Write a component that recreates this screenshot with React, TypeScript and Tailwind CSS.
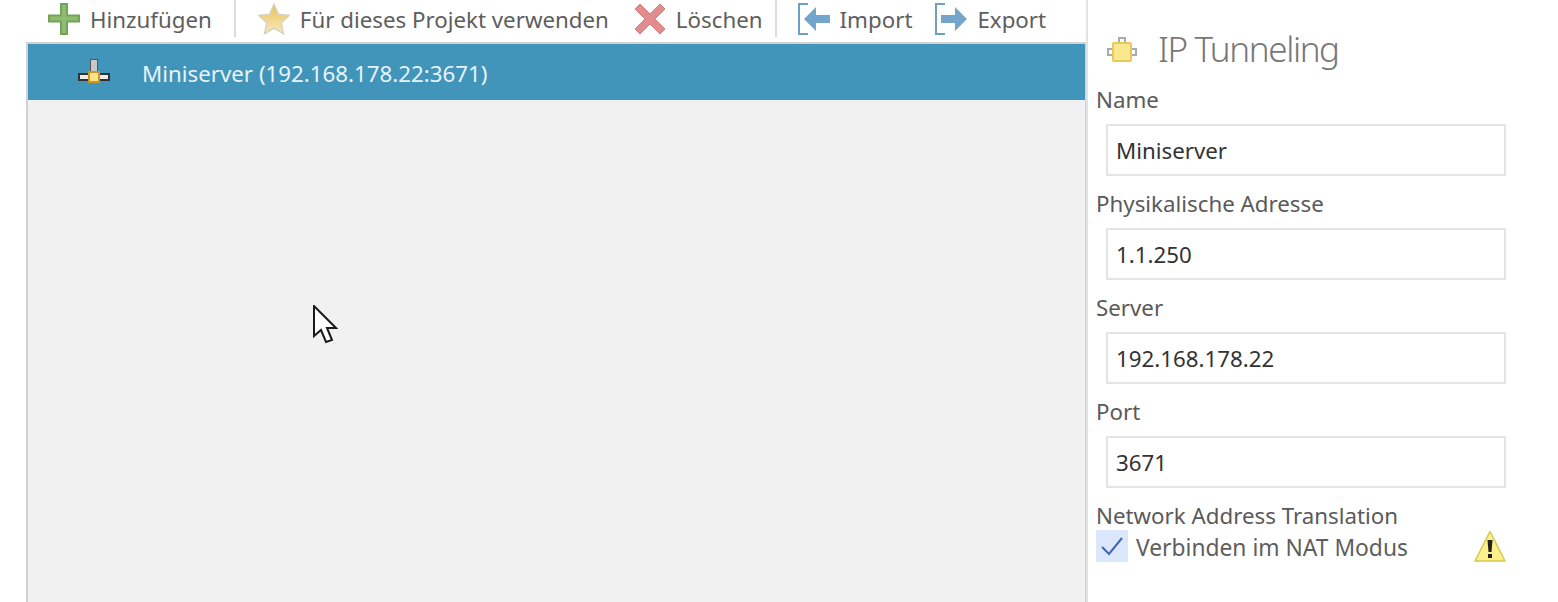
const FONT = "font-['Noto_Sans',sans-serif]";

function PlusIcon() {
  return (
    <svg width="32" height="32" viewBox="0 0 32 32">
      <path d="M13 1h6v11.5h12v6H19V31h-6V18.5H1v-6h12z" fill="#8fbc73" stroke="#73a356" strokeWidth="2" />
    </svg>
  );
}

function StarIcon() {
  return (
    <svg width="32" height="34" viewBox="0 0 32 34">
      <defs>
        <linearGradient id="star" x1="0" y1="0" x2="0" y2="1">
          <stop offset="0" stopColor="#e9c253" />
          <stop offset="1" stopColor="#f8e8bd" />
        </linearGradient>
      </defs>
      <path d="M16 2l4.5 10.2 10.8 1.2-8 7.4 2.2 10.9-9.5-5.5-9.5 5.5 2.2-10.9-8-7.4 10.8-1.2z" fill="url(#star)" stroke="#d8d2c2" strokeWidth="1.5" />
    </svg>
  );
}

function CrossIcon() {
  return (
    <svg width="32" height="32" viewBox="0 0 32 32">
      <path d="M6 1l10 10L26 1l5 5-10 10 10 10-5 5-10-10L6 31l-5-5 10-10L1 6z" fill="#e28d8d" stroke="#d87c7c" strokeWidth="1" />
    </svg>
  );
}

function ImportIcon() {
  return (
    <svg width="32" height="32" viewBox="0 0 32 32">
      <path d="M10 1H1v30h9" fill="none" stroke="#6f9fc4" strokeWidth="2" />
      <path d="M6 16L18 4v8h14v8H18v8z" fill="#74a6cd" />
    </svg>
  );
}

function ExportIcon() {
  return (
    <svg width="32" height="32" viewBox="0 0 32 32">
      <path d="M10 1H1v30h9" fill="none" stroke="#6f9fc4" strokeWidth="2" />
      <path d="M32 16L20 4v8H6v8h14v8z" fill="#74a6cd" />
    </svg>
  );
}

function TunnelIcon() {
  return (
    <svg width="30" height="25" viewBox="0 0 30 25">
      <rect x="1" y="12" width="5" height="6" fill="#fff" stroke="#aaa" strokeWidth="2" />
      <rect x="24" y="12" width="5" height="6" fill="#fff" stroke="#aaa" strokeWidth="2" />
      <rect x="12" y="1" width="6" height="5" fill="#fff" stroke="#aaa" strokeWidth="2" />
      <rect x="6" y="6" width="18" height="18" rx="1" fill="#f9e88e" stroke="#e9c95a" strokeWidth="2" />
    </svg>
  );
}

function RowIcon() {
  return (
    <svg width="32" height="26" viewBox="0 0 32 26">
      <rect x="12.5" y="0.5" width="7" height="14" fill="#c9c9c9" stroke="#555" strokeWidth="1" />
      <rect x="1" y="15" width="30" height="6" fill="#ececec" stroke="#333" strokeWidth="2" />
      <rect x="11" y="13" width="10" height="10" fill="#fbe582" stroke="#c9962b" strokeWidth="2" />
    </svg>
  );
}

function ToolButton({ icon, label }: { icon: React.ReactNode; label: string }) {
  return (
    <div className="flex items-center gap-[10px] text-[#5e5e5e]">
      {icon}
      <span className="pt-[2px]">{label}</span>
    </div>
  );
}

function Field({ label, value }: { label: string; value: string }) {
  return (
    <div className="flex flex-col">
      <label className="h-[42px] leading-[36px] text-[#5a5a5a]">{label}</label>
      <div className="ml-[10px] flex h-[52px] w-[400px] items-center border-2 border-[#e4e4e4] pl-[8px] pt-[2px] text-[#333]">
        {value}
      </div>
      <div className="h-[10px]" />
    </div>
  );
}

export default function App() {
  return (
    <div className={`${FONT} relative flex h-[602px] w-[1558px] overflow-hidden bg-white text-[22.3px]`}>
      <div className="flex w-[1088px] flex-col border-r-2 border-[#e2e2e2]">
        <div className="flex h-[42px] items-center pb-[5px] pl-[48px]">
          <ToolButton icon={<PlusIcon />} label="Hinzufügen" />
          <div className="mx-[22px] h-[38px] w-[2px] translate-y-[-1px] bg-[#dcdcdc]" />
          <ToolButton icon={<StarIcon />} label="Für dieses Projekt verwenden" />
          <div className="ml-[25px]" />
          <ToolButton icon={<CrossIcon />} label="Löschen" />
          <div className="ml-[12px] mr-[21px] h-[38px] w-[2px] translate-y-[-1px] bg-[#dcdcdc]" />
          <ToolButton icon={<ImportIcon />} label="Import" />
          <div className="ml-[23px]" />
          <ToolButton icon={<ExportIcon />} label="Export" />
        </div>
        <div className="ml-[26px] flex-1 border-l-2 border-r border-t-2 border-[#d2d2d2] bg-[#f1f1f1]">
          <div className="flex h-[56px] items-center gap-[32px] bg-[#4195ba] pl-[50px] text-[#e6f3f9]">
            <RowIcon />
            <span className="pt-[4px]">Miniserver (192.168.178.22:3671)</span>
          </div>
        </div>
      </div>

      <div className="flex flex-1 flex-col pl-[8px]">
        <div className="flex h-[82px] items-center gap-[21px] pl-[11px] pt-[16px] text-[35px] font-light tracking-[-1.4px] text-[#777]">
          <TunnelIcon />
          <span>IP Tunneling</span>
        </div>
        <Field label="Name" value="Miniserver" />
        <Field label="Physikalische Adresse" value="1.1.250" />
        <Field label="Server" value="192.168.178.22" />
        <Field label="Port" value="3671" />
        <label className="h-[32px] leading-[35px] text-[#5a5a5a]">Network Address Translation</label>
        <div className="flex h-[32px] w-[410px] items-center text-[#5e5e5e]">
          <div className="flex h-[32px] w-[32px] items-center justify-center bg-[#dde7fb]">
            <svg width="24" height="20" viewBox="0 0 24 20">
              <path d="M2 11l7 7L22 2" fill="none" stroke="#3f66b5" strokeWidth="2" />
            </svg>
          </div>
          <span className="ml-[8px] flex-1 pt-[4px] text-[22.8px]">Verbinden im NAT Modus</span>
          <svg width="32" height="32" viewBox="0 0 32 32">
            <path d="M16 1.5L31 31H1z" fill="#fbf08a" stroke="#d7c94a" strokeWidth="1.5" strokeLinejoin="round" />
            <path d="M13.5 10h5l-1 12h-3z" fill="#222" />
            <rect x="14" y="24" width="4" height="4" fill="#222" />
          </svg>
        </div>
      </div>

      <svg className="absolute left-[313px] top-[305px]" width="25" height="39" viewBox="0 0 25 39">
        <path d="M1 1v30l7-6 5 12 6-2-5-12h9z" fill="#fff" stroke="#1a1a1a" strokeWidth="2" />
      </svg>
    </div>
  );
}
